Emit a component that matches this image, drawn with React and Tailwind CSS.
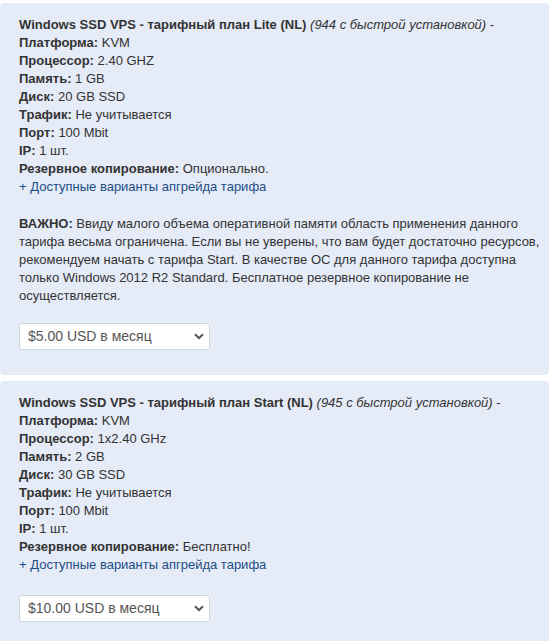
import React from 'react';

const plans = [
    {
        name: 'Windows SSD VPS - тарифный план Lite (NL)',
        note: '(944 с быстрой установкой)',
        specs: [
            ['Платформа:', 'KVM'],
            ['Процессор:', '2.40 GHZ'],
            ['Память:', '1 GB'],
            ['Диск:', '20 GB SSD'],
            ['Трафик:', 'Не учитывается'],
            ['Порт:', '100 Mbit'],
            ['IP:', '1 шт.'],
            ['Резервное копирование:', 'Опционально.'],
        ],
        warning: 'Ввиду малого объема оперативной памяти область применения данного тарифа весьма ограничена. Если вы не уверены, что вам будет достаточно ресурсов, рекомендуем начать с тарифа Start. В качестве ОС для данного тарифа доступна только Windows 2012 R2 Standard. Бесплатное резервное копирование не осуществляется.',
        price: '$5.00 USD в месяц',
    },
    {
        name: 'Windows SSD VPS - тарифный план Start (NL)',
        note: '(945 с быстрой установкой)',
        specs: [
            ['Платформа:', 'KVM'],
            ['Процессор:', '1x2.40 GHz'],
            ['Память:', '2 GB'],
            ['Диск:', '30 GB SSD'],
            ['Трафик:', 'Не учитывается'],
            ['Порт:', '100 Mbit'],
            ['IP:', '1 шт.'],
            ['Резервное копирование:', 'Бесплатно!'],
        ],
        price: '$10.00 USD в месяц',
    },
];

const PriceSelect = ({ price }) => (
    <div className="relative w-[191px]">
        <select className="appearance-none w-full h-[27px] bg-white border border-[#cfd4dc] rounded-[3px] pl-[8px] pr-6 text-[14px] text-[#555] font-['Liberation_Sans',Arial,sans-serif] outline-none">
            <option>{price}</option>
        </select>
        <svg className="absolute right-[6px] top-[10px] pointer-events-none" width="10" height="7" viewBox="0 0 10 7">
            <path d="M1 1.2 L5 5.2 L9 1.2" fill="none" stroke="#555" strokeWidth="2" />
        </svg>
    </div>
);

const PlanCard = ({ plan }) => (
    <div className="bg-[#e5ebf7] rounded-[4px] pl-[19px] pr-[8px] pt-[13px] pb-[25px]">
        <div className="text-[13px] leading-[18px] text-[#333]">
            <div>
                <b>{plan.name}</b> <i>{plan.note}</i> -
            </div>
            {plan.specs.map(([k, v]) => (
                <div key={k}>
                    <b>{k}</b> {v}
                </div>
            ))}
            <div className="text-[#1c4e86]">+ Доступные варианты апгрейда тарифа</div>
            {plan.warning && (
                <p className="mt-[19px]">
                    <b>ВАЖНО:</b> {plan.warning}
                </p>
            )}
        </div>
        <div className={plan.warning ? 'mt-[18px]' : 'mt-[21px]'}>
            <PriceSelect price={plan.price} />
        </div>
    </div>
);

const App = () => {
    return (
        <div className="bg-white min-h-screen pt-[3px] font-['Liberation_Sans',Arial,sans-serif] flex flex-col gap-[6px]">
            {plans.map((p) => (
                <PlanCard key={p.name} plan={p} />
            ))}
        </div>
    );
}

export default App
